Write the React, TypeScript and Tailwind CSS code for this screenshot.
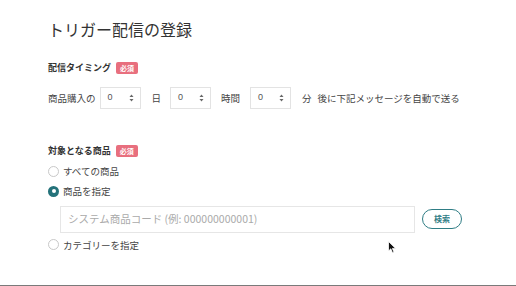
import React from 'react';

const font = { fontFamily: '"Noto Sans CJK JP", "Noto Sans", sans-serif' };

function Required() {
  return (
    <span className="ml-[5px] inline-flex h-[12px] items-center rounded-[2px] bg-[#e86f7e] px-[4px] text-[7px] font-bold leading-none text-white">
      必須
    </span>
  );
}

function NumberBox() {
  return (
    <div className="flex h-[22px] w-[41px] items-center justify-between border border-[#e3e3e3] bg-white pl-[7px] pr-[6px]">
      <span className="text-[9px] text-[#555]" style={{ fontFamily: '"Liberation Sans", sans-serif' }}>0</span>
      <svg width="5" height="8" viewBox="0 0 5 8">
        <path d="M2.5 0.5 L4.5 3 L0.5 3 Z" fill="#666" />
        <path d="M2.5 7.5 L4.5 5 L0.5 5 Z" fill="#666" />
      </svg>
    </div>
  );
}

function Radio({ checked, label }: { checked?: boolean; label: string }) {
  return (
    <label className="flex items-center gap-[4px] text-[9.5px] text-[#444]">
      {checked ? (
        <span className="flex h-[11px] w-[11px] items-center justify-center rounded-full bg-[#24727a]">
          <span className="h-[4px] w-[4px] rounded-full bg-white" />
        </span>
      ) : (
        <span className="h-[11px] w-[11px] rounded-full border border-[#c8c8c8] bg-white" />
      )}
      {label}
    </label>
  );
}

export default function App() {
  return (
    <div className="relative h-[286px] w-[516px] overflow-hidden bg-white text-[#333]" style={font}>
      <div className="px-[48px] pt-[15px]">
        <h1 className="text-[16px] leading-[28px] text-[#333]">トリガー配信の登録</h1>

        <div className="mt-[18px] flex items-center text-[9px] font-bold leading-[14px] text-[#333]">
          配信タイミング
          <Required />
        </div>

        <div className="mt-[12px] flex items-center text-[9.5px] text-[#444]">
          <span className="mr-[4px]">商品購入の</span>
          <NumberBox />
          <span className="ml-[11px] mr-[9px]">日</span>
          <NumberBox />
          <span className="ml-[10px] mr-[10px]">時間</span>
          <NumberBox />
          <span className="ml-[11px] mr-[6px]">分</span>
          <span>後に下記メッセージを自動で送る</span>
        </div>

        <div className="mt-[35px] flex items-center text-[9px] font-bold leading-[14px] text-[#333]">
          対象となる商品
          <Required />
        </div>

        <div className="mt-[6px] flex flex-col gap-[6px]">
          <Radio label="すべての商品" />
          <Radio checked label="商品を指定" />
        </div>

        <div className="mt-[7px] flex items-center pl-[12px]">
          <div className="flex h-[27px] w-[355px] items-center border border-[#e6e6e6] px-[7px] text-[10.5px] text-[#aaa]">
            システム商品コード (例: 000000000001)
          </div>
          <button className="ml-[7px] flex h-[20px] w-[40px] items-center justify-center rounded-full border border-[#2f7d85] text-[8px] font-bold text-[#2f7d85]">
            検索
          </button>
        </div>

        <div className="mt-[5px]">
          <Radio label="カテゴリーを指定" />
        </div>
      </div>

      <svg className="absolute left-[388px] top-[241px]" width="9" height="13" viewBox="0 0 9 13">
        <path d="M0.5 0.5 L0.5 10 L2.8 7.8 L4.5 11.8 L6 11.2 L4.4 7.4 L7.6 7.4 Z" fill="#111" stroke="#fff" strokeWidth="0.8" />
      </svg>

      <div className="absolute bottom-0 left-0 h-[1px] w-full bg-[#7a7a7a]" />
    </div>
  );
}
